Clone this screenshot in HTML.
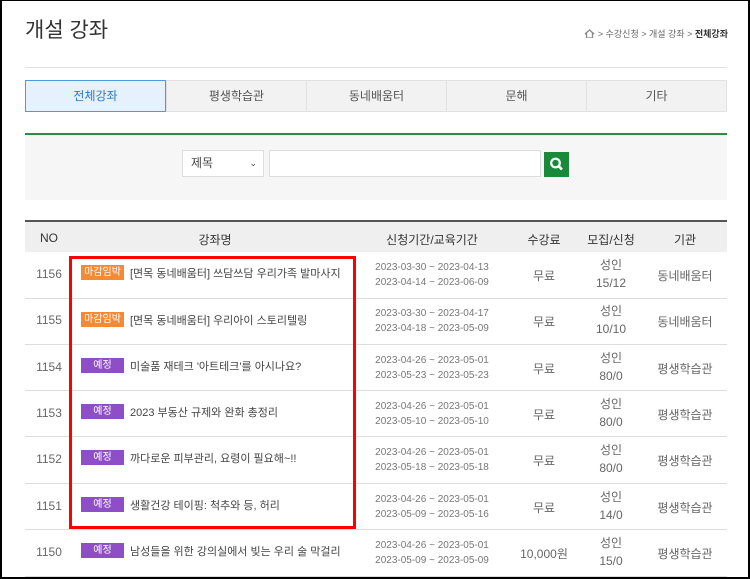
<!DOCTYPE html>
<html><head><meta charset="utf-8">
<style>
*{margin:0;padding:0;box-sizing:border-box}
body{width:750px;height:579px;background:#fff;font-family:"Liberation Sans","Noto Sans CJK KR",sans-serif;color:#555;position:relative;overflow:hidden}
.frame{position:absolute;left:0;top:0;width:750px;height:579px;border:2px solid #000;border-top:1px solid #000;z-index:5;pointer-events:none}
.a{position:absolute}
.title{left:25px;top:14px;font-size:21px;color:#333}
.bc{right:22px;top:27px;font-size:9px;color:#666}
.bc b{color:#333}
.hl{left:25px;top:67px;width:702px;height:1px;background:#e3e3e3}
.tabs{left:25px;top:80px;width:702px;height:32px;display:flex;background:#f2f2f2;border:1px solid #e2e2e2}
.tabs div{flex:1;text-align:center;line-height:30px;font-size:12px;color:#555;border-left:1px solid #e0e0e0}
.tabs div.on{background:#e5f1fc;border:1px solid #4a9be0;color:#2a7bd0;margin:-1px 0 -1px -1px}
.sbox{left:25px;top:133px;width:702px;height:67px;background:#f6f6f6;border-top:2px solid #2f8c46}
.sel{left:182px;top:150px;width:82px;height:27px;background:#fff;border:1px solid #ddd;font-size:12px;line-height:25px;padding-left:8px;color:#444}
.sel i{position:absolute;right:6px;top:0;font-style:normal;font-size:9px}
.inp{left:269px;top:150px;width:272px;height:27px;background:#fff;border:1px solid #ddd}
.btn{left:544px;top:152px;width:25px;height:25px;background:#1a8a3a}
.thead{left:25px;top:220px;width:702px;height:32px;background:#efefef;border-top:2px solid #555;font-size:12px;color:#333}
.c{position:absolute;text-align:center;transform:translateX(-50%);white-space:nowrap}
.row{position:absolute;left:25px;width:702px;border-bottom:1px solid #ddd;font-size:12px;color:#666}
.badge{position:absolute;left:56px;width:43px;height:15px;color:#fff;font-size:10px;text-align:center;line-height:12px;padding-top:2px;overflow:hidden}
.o{background:#f58a35}.p{background:#8e4ec6}
.t{position:absolute;left:105px;font-size:11px;color:#444;white-space:nowrap}
.d{font-size:10px;line-height:15px;color:#777}
.red{left:69px;top:256px;width:287px;height:273px;border:3px solid #f00}
</style></head><body>
<div class="frame"></div>
<div class="a title">개설 강좌</div>
<div class="a bc"><svg width="11" height="9" viewBox="0 0 11 9" style="vertical-align:-1px"><path d="M1 5L5.5 1 10 5M2.5 4v5h6V4" fill="none" stroke="#888" stroke-width="1.3"/></svg> &gt; 수강신청 &gt; 개설 강좌 &gt; <b>전체강좌</b></div>
<div class="a hl"></div>
<div class="a tabs"><div class="on">전체강좌</div><div>평생학습관</div><div>동네배움터</div><div>문해</div><div>기타</div></div>
<div class="a sbox"></div>
<div class="a sel">제목<i>⌄</i></div>
<div class="a inp"></div>
<div class="a btn"><svg width="25" height="25" viewBox="0 0 25 25"><circle cx="11.5" cy="11" r="4.3" fill="none" stroke="#fff" stroke-width="2.2"/><path d="M14.5 14l3.5 3.5" stroke="#fff" stroke-width="2.6"/></svg></div>
<div class="a thead">
<div class="c" style="left:24px;top:9px">NO</div>
<div class="c" style="left:190px;top:9px">강좌명</div>
<div class="c" style="left:407px;top:9px">신청기간/교육기간</div>
<div class="c" style="left:519px;top:9px">수강료</div>
<div class="c" style="left:586px;top:9px">모집/신청</div>
<div class="c" style="left:660px;top:9px">기관</div>
</div>

<div class="row" style="top:252px;height:47px"><div class="c" style="left:24px;top:15px">1156</div><div class="badge o" style="top:13px">마감임박</div><div class="t" style="top:13px">[면목 동네배움터] 쓰담쓰담 우리가족 발마사지</div><div class="c d" style="left:407px;top:8px">2023-03-30 ~ 2023-04-13<br>2023-04-14 ~ 2023-06-09</div><div class="c" style="left:519px;top:15px">무료</div><div class="c" style="left:586px;top:4px;line-height:18px">성인<br>15/12</div><div class="c" style="left:660px;top:15px">동네배움터</div></div>
<div class="row" style="top:298px;height:47px"><div class="c" style="left:24px;top:15px">1155</div><div class="badge o" style="top:14px">마감임박</div><div class="t" style="top:14px">[면목 동네배움터] 우리아이 스토리텔링</div><div class="c d" style="left:407px;top:8px">2023-03-30 ~ 2023-04-17<br>2023-04-18 ~ 2023-05-09</div><div class="c" style="left:519px;top:15px">무료</div><div class="c" style="left:586px;top:4px;line-height:18px">성인<br>10/10</div><div class="c" style="left:660px;top:15px">동네배움터</div></div>
<div class="row" style="top:345px;height:46px"><div class="c" style="left:24px;top:15px">1154</div><div class="badge p" style="top:13px">예정</div><div class="t" style="top:13px">미술품 재테크 '아트테크'를 아시나요?</div><div class="c d" style="left:407px;top:8px">2023-04-26 ~ 2023-05-01<br>2023-05-23 ~ 2023-05-23</div><div class="c" style="left:519px;top:15px">무료</div><div class="c" style="left:586px;top:4px;line-height:18px">성인<br>80/0</div><div class="c" style="left:660px;top:15px">평생학습관</div></div>
<div class="row" style="top:391px;height:46px"><div class="c" style="left:24px;top:15px">1153</div><div class="badge p" style="top:13px">예정</div><div class="t" style="top:13px">2023 부동산 규제와 완화 총정리</div><div class="c d" style="left:407px;top:8px">2023-04-26 ~ 2023-05-01<br>2023-05-10 ~ 2023-05-10</div><div class="c" style="left:519px;top:15px">무료</div><div class="c" style="left:586px;top:4px;line-height:18px">성인<br>80/0</div><div class="c" style="left:660px;top:15px">평생학습관</div></div>
<div class="row" style="top:437px;height:47px"><div class="c" style="left:24px;top:15px">1152</div><div class="badge p" style="top:13px">예정</div><div class="t" style="top:13px">까다로운 피부관리, 요령이 필요해~!!</div><div class="c d" style="left:407px;top:8px">2023-04-26 ~ 2023-05-01<br>2023-05-18 ~ 2023-05-18</div><div class="c" style="left:519px;top:15px">무료</div><div class="c" style="left:586px;top:4px;line-height:18px">성인<br>80/0</div><div class="c" style="left:660px;top:15px">평생학습관</div></div>
<div class="row" style="top:484px;height:46px"><div class="c" style="left:24px;top:15px">1151</div><div class="badge p" style="top:13px">예정</div><div class="t" style="top:13px">생활건강 테이핑: 척추와 등, 허리</div><div class="c d" style="left:407px;top:8px">2023-04-26 ~ 2023-05-01<br>2023-05-09 ~ 2023-05-16</div><div class="c" style="left:519px;top:15px">무료</div><div class="c" style="left:586px;top:4px;line-height:18px">성인<br>14/0</div><div class="c" style="left:660px;top:15px">평생학습관</div></div>
<div class="row" style="top:530px;height:47px"><div class="c" style="left:24px;top:15px">1150</div><div class="badge p" style="top:13px">예정</div><div class="t" style="top:13px">남성들을 위한 강의실에서 빚는 우리 술 막걸리</div><div class="c d" style="left:407px;top:8px">2023-04-26 ~ 2023-05-01<br>2023-05-09 ~ 2023-05-09</div><div class="c" style="left:519px;top:15px">10,000원</div><div class="c" style="left:586px;top:4px;line-height:18px">성인<br>15/0</div><div class="c" style="left:660px;top:15px">평생학습관</div></div>

<div class="a red"></div>
</body></html>
